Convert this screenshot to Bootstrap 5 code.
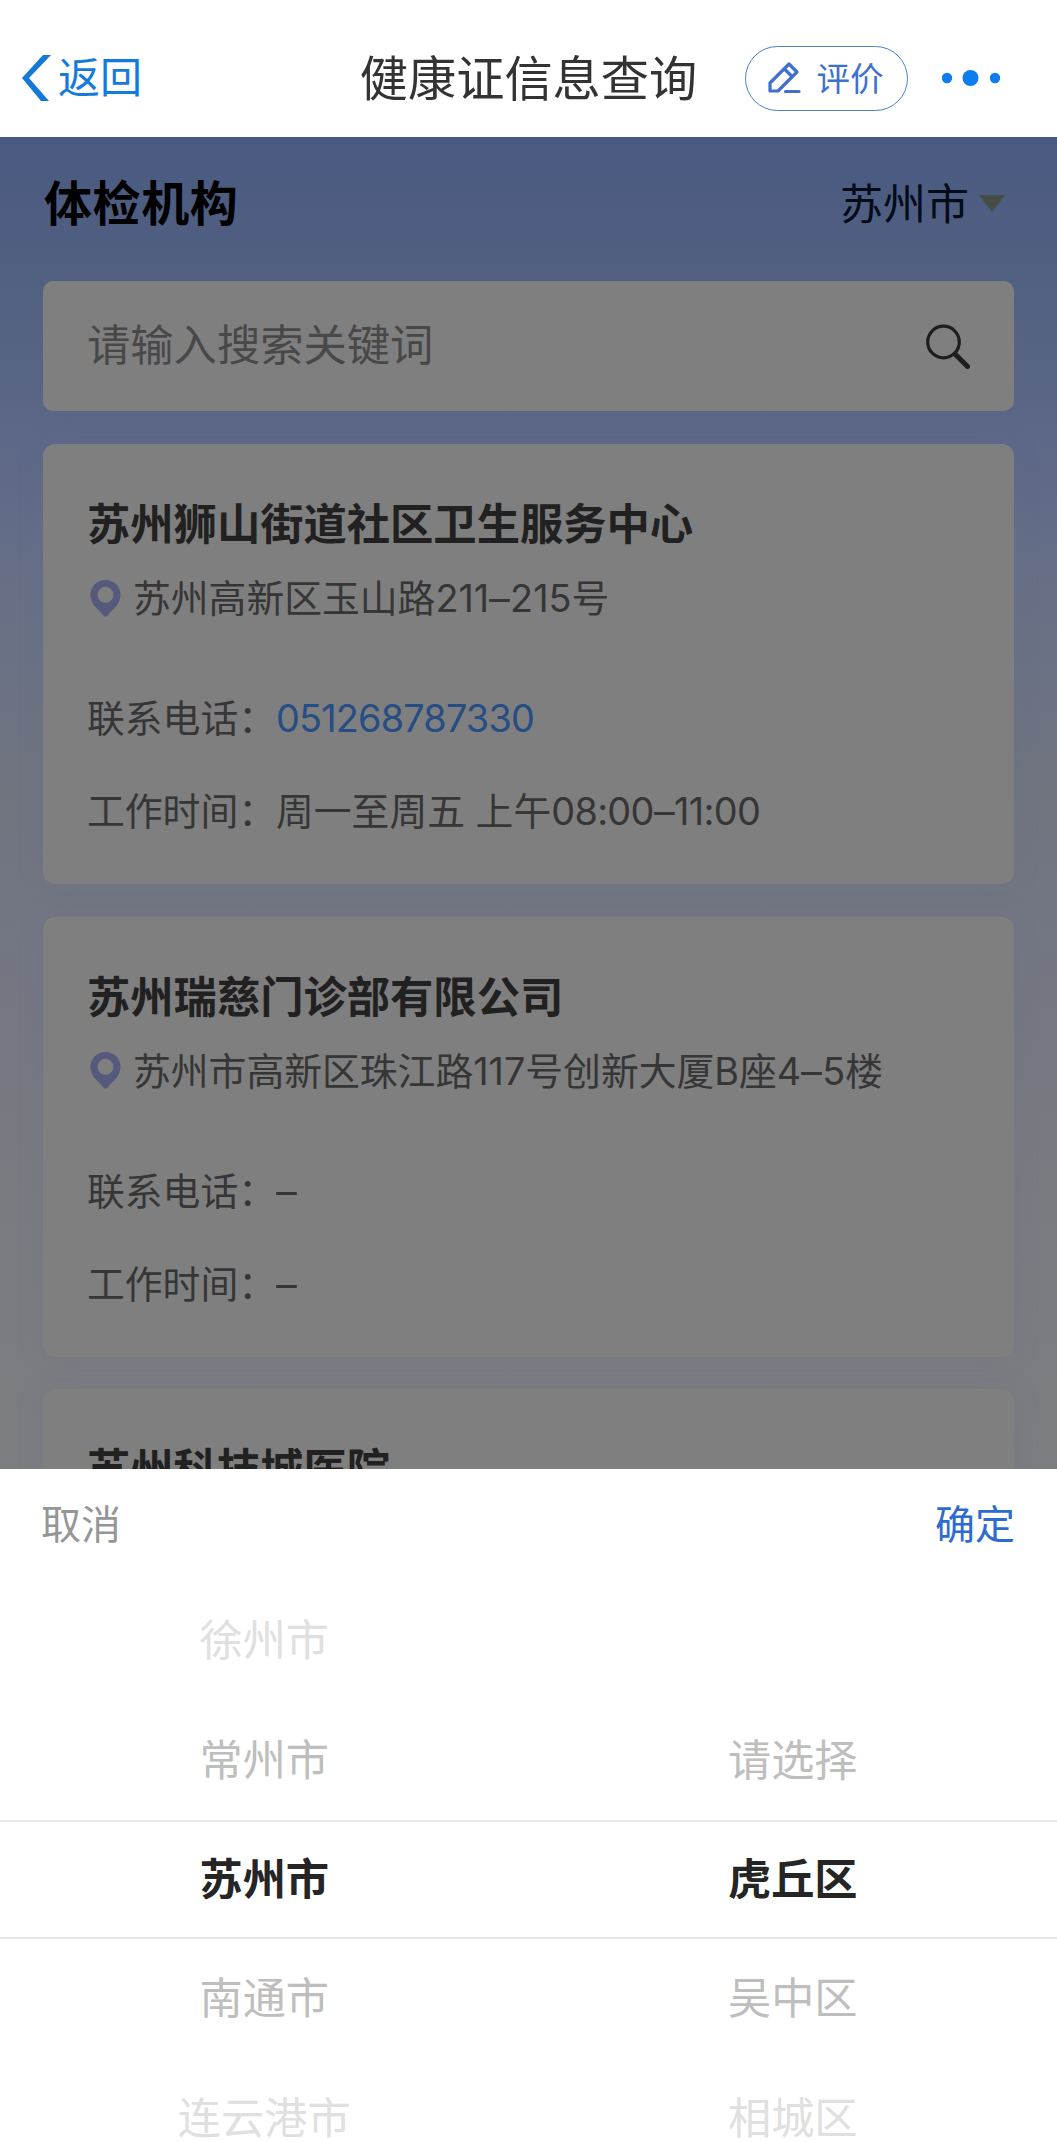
<!DOCTYPE html>
<html lang="zh-CN">
<head>
<meta charset="utf-8">
<meta name="viewport" content="width=device-width, initial-scale=1">
<title>健康证信息查询</title>
<link href="https://cdn.jsdelivr.net/npm/bootstrap@5.3.0/dist/css/bootstrap.min.css" rel="stylesheet">
<style>
  body { font-family: Inter, "Noto Sans CJK SC", sans-serif; color: #363636; background: #fff; }
  .screen { width: 1057px; height: 2142px; }
  .topbar { height: 137px; padding: 19px 0 0; }
  .topbar-side { flex: 1 1 0; }
  .back-link { color: #147bdc; font-size: 42px; line-height: 60px; gap: 6px; margin-left: 21px; }
  .page-title { font-size: 48.2px; line-height: 60px; padding-top: 2px; color: #333; }
  .rate-btn { --bs-btn-border-color: #4d7fc9; --bs-btn-color: #3f70cf; width: 163px; height: 65px; font-size: 33.5px; line-height: 60px; padding: 0; border-width: 1.5px; gap: 16px; }
  .rate-btn span { padding-top: 1px; }
  .rate-btn svg { margin-left: -3px; }
  .more-icon { margin-left: 23px; margin-right: 56px; }
  .content-area { height: 1332px; padding: 0 43px; background: linear-gradient(180deg, #4a5981 0, #505f80 120px, #5d6787 300px, #677087 450px, #70747f 650px, #737683 800px, #797b80 1060px, #7c7d81 1332px); }
  .section-head { height: 144px; padding: 0 8px 10px 1px; }
  .section-head h1 { font-size: 48px; line-height: 60px; letter-spacing: .6px; color: #000; }
  .city-pick { font-size: 43px; line-height: 60px; color: #040b18; gap: 9px; }
  .search-box { height: 130px; border-radius: 10px; background: #7f7f7f; color: #484848; font-size: 43.3px; line-height: 60px; padding: 0 44px; }
  .search-box span { padding-bottom: 2px; }
  .org-card { --bs-card-bg: #7f7f7f; --bs-card-border-width: 0; --bs-card-border-radius: 12px; --bs-card-color: #363636; height: 440px; padding: 50px 44px 0; box-shadow: 0 0 26px rgba(100,108,145,.2); font-size: 37.8px; line-height: 60px; }
  .org-stack { padding-top: 33px; gap: 32.5px; }
  .org-card h2 { font-size: 43.3px; line-height: 60px; color: #212121; }
  .org-addr { margin-top: 14px; gap: 12px; padding-left: 3px; }
  .org-phone { margin-top: 60px; }
  .org-time { margin-top: 33px; }
  .tel-link { color: #264d84; letter-spacing: -.8px; }
  .wide-dash { display: inline-block; transform: scaleX(1.1); transform-origin: left; margin-right: 2px; }
  .clock-range { letter-spacing: -.65px; }
  .sheet-head { height: 112px; font-size: 40px; padding: 0 42px 0 41px; }
  .sheet-cancel { color: #969696; }
  .sheet-ok { color: #2c6bd0; }
  .picker-col { font-size: 43.2px; }
  .picker-item { height: 119.4px; color: #bebebe; }
  .picker-far { color: #e0e0e0; }
  .picker-on { color: #252525; font-weight: 700; border-top: 2px solid #e9e9e9; border-bottom: 2px solid #e6e6e6; }
</style>
</head>
<body>
<div class="screen d-flex flex-column overflow-hidden">
  <header class="topbar d-flex align-items-center flex-shrink-0">
    <div class="topbar-side">
      <a class="back-link d-inline-flex align-items-center text-decoration-none" href="#">
        <svg width="31" height="48" viewBox="0 0 31 48" fill="#1478d8"><path d="M22 1h8L8 24 28 47h-8L1 24z"/></svg>返回
      </a>
    </div>
    <div class="page-title text-nowrap">健康证信息查询</div>
    <div class="topbar-side d-flex align-items-center justify-content-end">
      <button type="button" class="rate-btn btn btn-outline-primary rounded-pill d-flex align-items-center justify-content-center flex-shrink-0">
        <svg width="34" height="34" viewBox="0 0 34 34" fill="none" stroke="#3f70cf" stroke-width="3.200" stroke-linejoin="round" stroke-linecap="round"><path d="M22 3l8 8-9 9L11 30H3v-8zM17.500 8l7.500 7.500M18.500 30.500H32"/></svg>
        <span>评价</span>
      </button>
      <svg class="more-icon flex-shrink-0" width="70" height="20" viewBox="0 0 70 20" fill="#0b7df0"><circle cx="16" cy="10" r="5.200"/><circle cx="39.500" cy="10" r="8"/><circle cx="64" cy="10" r="5.200"/></svg>
    </div>
  </header>

  <main class="content-area flex-shrink-0 overflow-hidden">
    <div class="section-head d-flex align-items-center justify-content-between">
      <h1 class="fw-bold m-0">体检机构</h1>
      <div class="city-pick d-flex align-items-center">苏州市<svg width="28" height="18" viewBox="0 0 28 18" fill="#454d47"><path d="M1 0h26L14 17z"/></svg></div>
    </div>
    <div class="search-box d-flex align-items-center justify-content-between">
      <span>请输入搜索关键词</span>
      <svg width="44" height="46" viewBox="0 0 44 46" fill="none" stroke="#1e1e1e" stroke-linecap="round"><circle cx="17.500" cy="19" r="15.800" stroke-width="3.200"/><path d="M29 31L41.500 43.500" stroke-width="5"/></svg>
    </div>
    <div class="org-stack d-flex flex-column">
      <article class="org-card card">
        <h2 class="fw-bold m-0 text-nowrap">苏州狮山街道社区卫生服务中心</h2>
        <div class="org-addr d-flex align-items-center text-nowrap">
          <svg width="31" height="37" viewBox="0 0 31 37" fill="#555a7d" fill-rule="evenodd"><path d="M15.500 0C24 0 30.500 6.500 30.500 15c0 6-3.500 11-8 15l-5.500 6q-1.500 1.500-3 0l-5.500-6C4 26 .5 21 .5 15 .5 6.500 7 0 15.500 0zM15.500 6.800a8 8 0 1 0 0 16 8 8 0 1 0 0-16z"/></svg>
          <span>苏州高新区玉山路211<span class="wide-dash">–</span>215号</span>
        </div>
        <div class="org-phone text-nowrap">联系电话：<a class="tel-link text-decoration-none" href="tel:051268787330">051268787330</a></div>
        <div class="org-time text-nowrap">工作时间：周一至周五 上午<span class="clock-range">08:00<span class="wide-dash">–</span>11:00</span></div>
      </article>
      <article class="org-card card">
        <h2 class="fw-bold m-0 text-nowrap">苏州瑞慈门诊部有限公司</h2>
        <div class="org-addr d-flex align-items-center text-nowrap">
          <svg width="31" height="37" viewBox="0 0 31 37" fill="#555a7d" fill-rule="evenodd"><path d="M15.500 0C24 0 30.500 6.500 30.500 15c0 6-3.500 11-8 15l-5.500 6q-1.500 1.500-3 0l-5.500-6C4 26 .5 21 .5 15 .5 6.500 7 0 15.500 0zM15.500 6.800a8 8 0 1 0 0 16 8 8 0 1 0 0-16z"/></svg>
          <span>苏州市高新区珠江路117号创新大厦B座4<span class="wide-dash">–</span>5楼</span>
        </div>
        <div class="org-phone text-nowrap">联系电话：<span class="wide-dash">–</span></div>
        <div class="org-time text-nowrap">工作时间：<span class="wide-dash">–</span></div>
      </article>
      <article class="org-card card">
        <h2 class="fw-bold m-0 text-nowrap">苏州科技城医院</h2>
      </article>
    </div>
  </main>

  <section class="bg-white flex-shrink-0">
    <div class="sheet-head d-flex align-items-center justify-content-between">
      <span class="sheet-cancel">取消</span>
      <span class="sheet-ok">确定</span>
    </div>
    <div class="row g-0 text-center">
      <div class="picker-col col-6">
        <div class="picker-item picker-far d-flex align-items-center justify-content-center">徐州市</div>
        <div class="picker-item d-flex align-items-center justify-content-center">常州市</div>
        <div class="picker-item picker-on d-flex align-items-center justify-content-center">苏州市</div>
        <div class="picker-item d-flex align-items-center justify-content-center">南通市</div>
        <div class="picker-item picker-far d-flex align-items-center justify-content-center">连云港市</div>
      </div>
      <div class="picker-col col-6">
        <div class="picker-item"></div>
        <div class="picker-item d-flex align-items-center justify-content-center">请选择</div>
        <div class="picker-item picker-on d-flex align-items-center justify-content-center">虎丘区</div>
        <div class="picker-item d-flex align-items-center justify-content-center">吴中区</div>
        <div class="picker-item picker-far d-flex align-items-center justify-content-center">相城区</div>
      </div>
    </div>
  </section>
</div>
<script src="https://cdn.jsdelivr.net/npm/bootstrap@5.3.0/dist/js/bootstrap.bundle.min.js"></script>
</body>
</html>
